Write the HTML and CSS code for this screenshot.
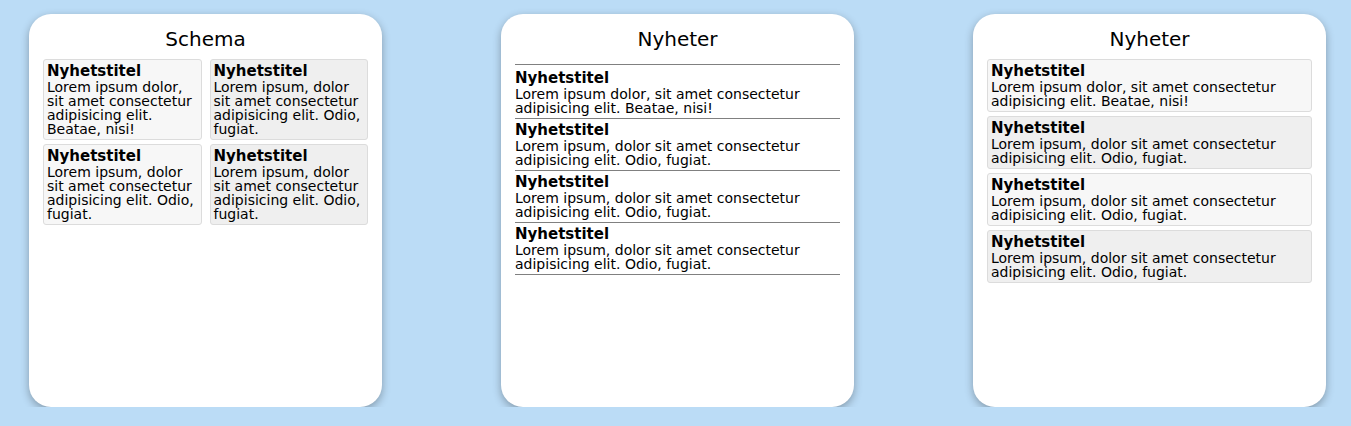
FILE: index.html
```html
<!DOCTYPE html>
<html lang="sv">
<head>
  <meta charset="UTF-8">
  <meta name="viewport" content="width=device-width, initial-scale=1.0">
  <title>Nyheter</title>
  <link rel="stylesheet" href="styles.css">
</head>
<body>
  <div class="board">
    <section class="panel">
      <h2>Schema</h2>
      <div class="news-grid">
        <article class="news-box">
          <h4>Nyhetstitel</h4>
          <p>Lorem ipsum dolor, sit amet consectetur adipisicing elit. Beatae, nisi!</p>
        </article>
        <article class="news-box">
          <h4>Nyhetstitel</h4>
          <p>Lorem ipsum, dolor sit amet consectetur adipisicing elit. Odio, fugiat.</p>
        </article>
        <article class="news-box">
          <h4>Nyhetstitel</h4>
          <p>Lorem ipsum, dolor sit amet consectetur adipisicing elit. Odio, fugiat.</p>
        </article>
        <article class="news-box">
          <h4>Nyhetstitel</h4>
          <p>Lorem ipsum, dolor sit amet consectetur adipisicing elit. Odio, fugiat.</p>
        </article>
      </div>
    </section>

    <section class="panel">
      <h2>Nyheter</h2>
      <div class="news-list">
        <article class="news-row">
          <h4>Nyhetstitel</h4>
          <p>Lorem ipsum dolor, sit amet consectetur adipisicing elit. Beatae, nisi!</p>
        </article>
        <article class="news-row">
          <h4>Nyhetstitel</h4>
          <p>Lorem ipsum, dolor sit amet consectetur adipisicing elit. Odio, fugiat.</p>
        </article>
        <article class="news-row">
          <h4>Nyhetstitel</h4>
          <p>Lorem ipsum, dolor sit amet consectetur adipisicing elit. Odio, fugiat.</p>
        </article>
        <article class="news-row">
          <h4>Nyhetstitel</h4>
          <p>Lorem ipsum, dolor sit amet consectetur adipisicing elit. Odio, fugiat.</p>
        </article>
      </div>
    </section>

    <section class="panel">
      <h2>Nyheter</h2>
      <div class="news-stack">
        <article class="news-box">
          <h4>Nyhetstitel</h4>
          <p>Lorem ipsum dolor, sit amet consectetur adipisicing elit. Beatae, nisi!</p>
        </article>
        <article class="news-box">
          <h4>Nyhetstitel</h4>
          <p>Lorem ipsum, dolor sit amet consectetur adipisicing elit. Odio, fugiat.</p>
        </article>
        <article class="news-box">
          <h4>Nyhetstitel</h4>
          <p>Lorem ipsum, dolor sit amet consectetur adipisicing elit. Odio, fugiat.</p>
        </article>
        <article class="news-box">
          <h4>Nyhetstitel</h4>
          <p>Lorem ipsum, dolor sit amet consectetur adipisicing elit. Odio, fugiat.</p>
        </article>
      </div>
    </section>
  </div>
</body>
</html>
```

FILE: styles.css
```css
* {
  box-sizing: border-box;
}
body {
  margin: 0;
  background: #bbdcf6;
  font-family: "DejaVu Sans", Verdana, sans-serif;
  color: #000;
}
.board {
  display: flex;
  justify-content: space-between;
  padding: 14px 25px 0 29px;
}
.panel {
  width: 353px;
  height: 393px;
  background: #fff;
  border-radius: 22px;
  padding: 14px 14px;
  box-shadow: 0 3px 8px rgba(0, 0, 0, 0.3);
}
.panel h2 {
  margin: 0 0 8px;
  font-size: 20px;
  font-weight: normal;
  line-height: 23px;
  text-align: center;
}
h4 {
  margin: 0;
  font-size: 15px;
  line-height: 18px;
  font-weight: bold;
}
p {
  margin: 0;
  font-size: 14px;
  line-height: 14px;
}
.news-grid {
  display: grid;
  grid-template-columns: 1fr 1fr;
  gap: 4px 8px;
}
.news-stack {
  display: flex;
  flex-direction: column;
  gap: 4px;
}
.news-box {
  background: #f7f7f7;
  border: 1px solid #dcdcdc;
  border-radius: 3px;
  padding: 2px 3px 3px;
}
.news-box:nth-child(even) {
  background: #efefef;
}
.news-list {
  margin-top: 13px;
  border-top: 1px solid #808080;
}
.news-row {
  border-bottom: 1px solid #808080;
  padding: 2px 0 3px;
}
.news-row:first-child {
  padding-top: 4px;
}
```
